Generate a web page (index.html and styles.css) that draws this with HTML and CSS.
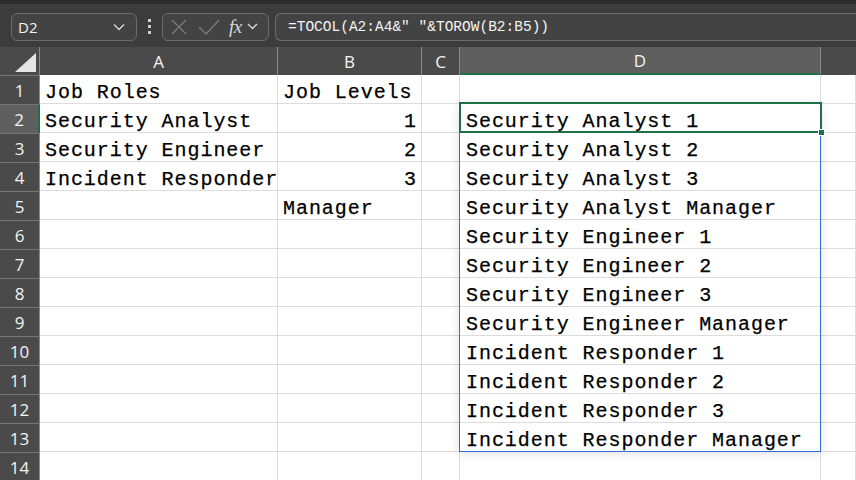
FILE: index.html
```html
<!DOCTYPE html>
<html>
<head>
<meta charset="utf-8">
<link rel="stylesheet" href="styles.css">
</head>
<body>
<div class="app">
  <div class="toolbar">
    <div class="namebox">
      <span class="name">D2</span>
      <svg class="chev" width="12" height="8" viewBox="0 0 12 8"><path d="M1 1.5 L6 6.5 L11 1.5" fill="none" stroke="#d8d8d8" stroke-width="1.3"/></svg>
    </div>
    <div class="dots"><i></i><i></i><i></i></div>
    <div class="fxbox">
      <svg width="18" height="18" viewBox="0 0 18 18"><path d="M2 2 L16 16 M16 2 L2 16" stroke="#7c7c7c" stroke-width="1.3" fill="none"/></svg>
      <svg width="22" height="18" viewBox="0 0 22 18"><path d="M1 9 L8 16 L21 2" stroke="#7c7c7c" stroke-width="1.3" fill="none"/></svg>
      <span class="fx">fx</span>
      <svg class="chev2" width="11" height="7" viewBox="0 0 11 7"><path d="M1 1 L5.5 5.5 L10 1" fill="none" stroke="#d8d8d8" stroke-width="1.3"/></svg>
    </div>
    <div class="formula">=TOCOL(A2:A4&amp;" "&amp;TOROW(B2:B5))</div>
  </div>
  <div class="sheet">
    <div class="corner"><span class="tri"></span></div>
    <div class="ch">A</div>
    <div class="ch">B</div>
    <div class="ch">C</div>
    <div class="ch sel">D</div>
    <div class="ch last"></div>

    <div class="rh">1</div><div class="c">Job Roles</div><div class="c">Job Levels</div><div class="c"></div><div class="c"></div><div class="c"></div>
    <div class="rh sel">2</div><div class="c">Security Analyst</div><div class="c num">1</div><div class="c"></div><div class="c d anchor">Security Analyst 1<span class="spill"></span><span class="active"><span class="handle"></span></span></div><div class="c"></div>
    <div class="rh">3</div><div class="c">Security Engineer</div><div class="c num">2</div><div class="c"></div><div class="c d">Security Analyst 2</div><div class="c"></div>
    <div class="rh">4</div><div class="c">Incident Responder</div><div class="c num">3</div><div class="c"></div><div class="c d">Security Analyst 3</div><div class="c"></div>
    <div class="rh">5</div><div class="c"></div><div class="c">Manager</div><div class="c"></div><div class="c d">Security Analyst Manager</div><div class="c"></div>
    <div class="rh">6</div><div class="c"></div><div class="c"></div><div class="c"></div><div class="c d">Security Engineer 1</div><div class="c"></div>
    <div class="rh">7</div><div class="c"></div><div class="c"></div><div class="c"></div><div class="c d">Security Engineer 2</div><div class="c"></div>
    <div class="rh">8</div><div class="c"></div><div class="c"></div><div class="c"></div><div class="c d">Security Engineer 3</div><div class="c"></div>
    <div class="rh">9</div><div class="c"></div><div class="c"></div><div class="c"></div><div class="c d">Security Engineer Manager</div><div class="c"></div>
    <div class="rh">10</div><div class="c"></div><div class="c"></div><div class="c"></div><div class="c d">Incident Responder 1</div><div class="c"></div>
    <div class="rh">11</div><div class="c"></div><div class="c"></div><div class="c"></div><div class="c d">Incident Responder 2</div><div class="c"></div>
    <div class="rh">12</div><div class="c"></div><div class="c"></div><div class="c"></div><div class="c d">Incident Responder 3</div><div class="c"></div>
    <div class="rh">13</div><div class="c"></div><div class="c"></div><div class="c"></div><div class="c d">Incident Responder Manager</div><div class="c"></div>
    <div class="rh">14</div><div class="c"></div><div class="c"></div><div class="c"></div><div class="c"></div><div class="c"></div>
  </div>
</div>
</body>
</html>
```
FILE: styles.css
```css
* { box-sizing: border-box; }
html, body { margin: 0; padding: 0; }
body { width: 856px; height: 480px; overflow: hidden; background: #ffffff; font-family: "Liberation Sans", Arial, sans-serif; }

.app { display: flex; flex-direction: column; height: 480px; }

.toolbar {
  height: 47px;
  flex: none;
  background: #3c3c3c;
  border-top: 4px solid #2c2c2c;
  display: flex;
  align-items: center;
  padding: 2px 0 0 11px;
}
.namebox {
  width: 126px; height: 28px;
  border: 1px solid #6c6c6c; border-radius: 6px;
  background: #434343;
  display: flex; align-items: center; justify-content: space-between;
  padding: 0 11px 0 6px;
}
.name { color: #f2f2f2; font-size: 15px; font-family: "Open Sans", "Liberation Sans", sans-serif; }
.dots { width: 25px; display: flex; flex-direction: column; align-items: center; gap: 3px; }
.dots i { display: block; width: 3px; height: 3px; background: #d0d0d0; }
.fxbox {
  width: 107px; height: 28px;
  border: 1px solid #6c6c6c; border-radius: 6px;
  background: #434343;
  display: flex; align-items: center;
  padding: 0 0 0 7px;
}
.fxbox svg:nth-child(1) { margin-right: 10px; }
.fxbox svg:nth-child(2) { margin-right: 9px; }
.fx { color: #d8d8d8; font-family: "Liberation Serif", serif; font-style: italic; font-size: 19px; margin-right: 5px; letter-spacing: -0.5px; }
.formula {
  margin-left: 6px;
  flex: 1; height: 28px;
  border: 1px solid #6c6c6c; border-right: none; border-radius: 6px 0 0 6px;
  background: #434343;
  color: #f4f4f4;
  font-family: "Liberation Mono", monospace; font-size: 14.5px;
  display: flex; align-items: center;
  padding-left: 12px;
}

.sheet {
  flex: 1;
  display: grid;
  grid-template-columns: 40px 238px 144px 38px 361px 1fr;
  grid-template-rows: 28px repeat(14, 29px);
  overflow: hidden;
}
.corner { background: #4a4a4a; border-right: 1px solid #8a8a8a; position: relative; }
.tri {
  position: absolute; right: 3px; bottom: 3px;
  width: 0; height: 0;
  border-left: 21px solid transparent;
  border-bottom: 19px solid #e6e6e6;
}
.ch {
  background: #4a4a4a;
  color: #f4f4f4;
  font-family: "Open Sans", "Liberation Sans", sans-serif;
  font-size: 17px;
  display: flex; align-items: center; justify-content: center;
  border-right: 1px solid #8a8a8a;
}
.ch.sel { background: #5f5f5f; border-bottom: 2px solid #1e7145; }
.ch.last { border-right: none; }
.rh {
  background: #4a4a4a;
  color: #f4f4f4;
  font-family: "Open Sans", "Liberation Sans", sans-serif;
  font-size: 17px;
  display: flex; align-items: center; justify-content: center;
  border-top: 1px solid #767676;
  border-right: 1px solid #8a8a8a;
}
.rh.sel { background: #5f5f5f; border-right: 2px solid #1e7145; }
.c {
  border-right: 1px solid #dcdcdc;
  border-bottom: 1px solid #dcdcdc;
  font-family: "Liberation Mono", monospace;
  font-size: 20px;
  letter-spacing: 0.95px;
  color: #000;
  -webkit-text-stroke: 0.25px #000;
  white-space: nowrap;
  line-height: 29px;
  padding: 3px 0 0 5px;
}
.c.num { text-align: right; padding-right: 4px; }
.c.d { padding-left: 6px; }
.anchor { position: relative; }

.spill {
  position: absolute;
  left: -1px; top: -1px;
  width: 362px; height: 349px;
  border: 1px solid #2e6fd4;
  box-shadow: 0 2px 10px rgba(0,0,0,0.12);
  z-index: 1;
  pointer-events: none;
}
.active {
  position: absolute;
  left: -1px; top: -2px;
  width: 363px; height: 31px;
  border: 2px solid #1e7145;
  z-index: 2;
}
.handle {
  position: absolute; right: -5px; bottom: -5px;
  width: 7px; height: 7px; background: #1e7145; border: 1px solid #fff;
}
```
